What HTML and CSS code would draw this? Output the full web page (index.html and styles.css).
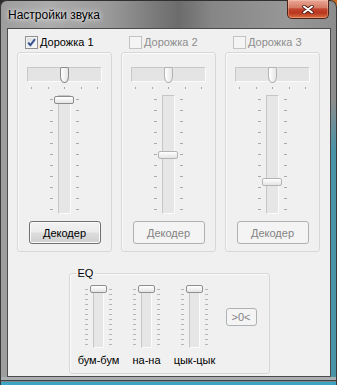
FILE: index.html
```html
<!DOCTYPE html>
<html lang="ru">

<head>
    <meta charset="UTF-8" />
    <meta name="viewport" content="width=device-width, initial-scale=1.0" />
    <title>Настройки звука</title>
    <link rel="stylesheet" href="styles.css">
</head>

<body>
    <div class="window">
        <div class="titlebar">
            <span class="title">Настройки звука</span>
            <button class="close" aria-label="Закрыть">
                <svg width="12" height="9" viewBox="0 0 12 9">
                    <path d="M2 1.5 L10 7.5 M10 1.5 L2 7.5" stroke="#4a1a12" stroke-width="3.6" stroke-linecap="round" fill="none" />
                    <path d="M2 1.5 L10 7.5 M10 1.5 L2 7.5" stroke="#ffffff" stroke-width="2" stroke-linecap="round" fill="none" />
                </svg>
            </button>
        </div>

        <div class="client">
            <div class="tracks">
                <!-- дорожка 1 -->
                <div class="track-col">
                    <label class="check">
                        <span class="box">
                            <svg width="9" height="9" viewBox="0 0 9 9">
                                <path d="M1.2 4.6 L3.4 7.2 L8 1.2" stroke="#34508f" stroke-width="1.9" fill="none" />
                            </svg>
                        </span>
                        Дорожка 1
                    </label>
                    <div class="panel">
                        <div class="hslider">
                            <div class="hchannel"><div class="hthumb"></div></div>
                            <div class="hticks"><i></i><i></i><i></i><i></i><i></i></div>
                        </div>
                        <div class="vslider">
                            <div class="vchannel"></div>
                            <div class="vthumb" style="top: 1px;"></div>
                        </div>
                        <button class="btn">Декодер</button>
                    </div>
                </div>
                <!-- дорожка 2 -->
                <div class="track-col off">
                    <label class="check"><span class="box"></span>Дорожка 2</label>
                    <div class="panel">
                        <div class="hslider">
                            <div class="hchannel"><div class="hthumb"></div></div>
                            <div class="hticks"><i></i><i></i><i></i><i></i><i></i></div>
                        </div>
                        <div class="vslider">
                            <div class="vchannel"></div>
                            <div class="vthumb" style="top: 56px;"></div>
                        </div>
                        <button class="btn" disabled>Декодер</button>
                    </div>
                </div>
                <!-- дорожка 3 -->
                <div class="track-col off">
                    <label class="check"><span class="box"></span>Дорожка 3</label>
                    <div class="panel">
                        <div class="hslider">
                            <div class="hchannel"><div class="hthumb"></div></div>
                            <div class="hticks"><i></i><i></i><i></i><i></i><i></i></div>
                        </div>
                        <div class="vslider">
                            <div class="vchannel"></div>
                            <div class="vthumb" style="top: 83px;"></div>
                        </div>
                        <button class="btn" disabled>Декодер</button>
                    </div>
                </div>
            </div>

            <fieldset class="eq">
                <legend>EQ</legend>
                <div class="eq-row">
                    <div class="eq-col">
                        <div class="eslider"><div class="echannel"></div><div class="ethumb"></div></div>
                        <span class="eq-label">бум-бум</span>
                    </div>
                    <div class="eq-col">
                        <div class="eslider"><div class="echannel"></div><div class="ethumb"></div></div>
                        <span class="eq-label">на-на</span>
                    </div>
                    <div class="eq-col">
                        <div class="eslider"><div class="echannel"></div><div class="ethumb"></div></div>
                        <span class="eq-label">цык-цык</span>
                    </div>
                    <button class="btn small" disabled>&gt;0&lt;</button>
                </div>
            </fieldset>
        </div>
    </div>
</body>

</html>
```

FILE: styles.css
```css
* {
    box-sizing: border-box;
}

body {
    margin: 0;
    background: linear-gradient(90deg, #2b2b2b 50%, #c8681c 50%);
    font-family: 'Liberation Sans', Arial, sans-serif;
    font-size: 11px;
}

/* окно в стиле Vista */
.window {
    width: 337px;
    height: 385px;
    display: flex;
    flex-direction: column;
    border-radius: 7px 7px 0 0;
    overflow: hidden;
    box-shadow: inset 0 1px 0 #303030, inset 1px 0 0 #3a3a3a, inset -1px 0 0 #3a3a3a;
    background-image:
        linear-gradient(to bottom, transparent 377px, #a9aeb0 377px 380px, #3d4245 380px 381px, #7d8689 381px 382px, #3ba5c4 382px),
        linear-gradient(to bottom, transparent 100px, #4a94a8 150px),
        linear-gradient(90deg, #9c9c9c 0, #acacac 14%, #9a9a9a 32%, #7a7a7a 46%, #6c6c6c 53%, #868686 63%, #979797 85%, #8c8c8c 100%);
    background-size: 100% 100%, 6px 100%, 100% 100%;
    background-position: 0 0, right top, 0 0;
    background-repeat: no-repeat;
}

.titlebar {
    height: 28px;
    flex: none;
    display: flex;
    justify-content: space-between;
    padding: 0 8px;
}

.title {
    margin-top: 9px;
    font-size: 12px;
    line-height: 1;
    color: #000;
    text-shadow: 0 0 7px #fff, 0 0 3px rgba(255, 255, 255, 0.7);
}

.close {
    width: 42px;
    height: 19px;
    padding: 0;
    display: flex;
    align-items: center;
    justify-content: center;
    border: 1px solid #4d2218;
    border-top: none;
    border-radius: 0 0 5px 5px;
    background: linear-gradient(#e9a795 0%, #d67c66 42%, #c2452d 50%, #b8361f 72%, #dc6f40 100%);
    box-shadow: inset 0 0 0 1px rgba(255, 220, 200, 0.35);
}

.client {
    margin: 0 6px 0 7px;
    height: 349px;
    flex: none;
    border: 1px solid #4b4b4b;
    background: #f0f0f0;
    padding-top: 7px;
}

.tracks {
    display: flex;
    gap: 9px;
    padding-left: 9px;
}

.track-col {
    width: 95px;
}

.check {
    display: flex;
    align-items: center;
    gap: 2px;
    height: 13px;
    line-height: 13px;
    margin: 0 0 3px 8px;
    color: #000;
}

.box {
    width: 13px;
    height: 13px;
    flex: none;
    display: flex;
    align-items: center;
    justify-content: center;
    border: 1px solid #8e8f8f;
    background: linear-gradient(135deg, #d7dade, #fbfbfb);
    box-shadow: inset 0 0 0 1px #f4f4f4;
}

.off .check {
    color: #8d8d8d;
}

.off .box {
    border-color: #c3c3c3;
    background: #f4f4f4;
    box-shadow: none;
}

/* рамка дорожки */
.panel {
    height: 200px;
    display: flex;
    flex-direction: column;
    align-items: center;
    padding-top: 14px;
    border: 1px solid #d7d7d7;
    border-radius: 3px;
    box-shadow: inset 1px 1px 0 #fbfbfb;
}

.hslider {
    width: 75px;
}

.hchannel {
    position: relative;
    height: 15px;
    background: #e4e4e4;
    border: 1px solid;
    border-color: #c8c8c8 #fbfbfb #fbfbfb #c8c8c8;
}

.hthumb {
    position: absolute;
    left: 32px;
    top: -1px;
    width: 9px;
    height: 16px;
    border: 1px solid #8b8b8b;
    border-radius: 2px 2px 4px 4px / 2px 2px 7px 7px;
    background: linear-gradient(90deg, #ffffff, #e6e6e6);
}

.hticks {
    display: flex;
    justify-content: space-between;
    height: 2px;
    margin-top: 5px;
    padding: 0 4px;
}

.hticks i {
    width: 1px;
    height: 2px;
    background: #a9a9a9;
}

.vslider {
    position: relative;
    width: 29px;
    height: 119px;
    margin-top: 6px;
    display: flex;
    justify-content: center;
    background-image:
        repeating-linear-gradient(to bottom, #a9a9a9 0 1px, transparent 1px 11px),
        repeating-linear-gradient(to bottom, #a9a9a9 0 1px, transparent 1px 11px);
    background-size: 3px 111px;
    background-position: 0 4px, 100% 4px;
    background-repeat: no-repeat;
}

.vchannel {
    width: 13px;
    height: 100%;
    background: #e6e6e6;
    border: 1px solid;
    border-color: #c6c6c6 #fbfbfb #fbfbfb #c6c6c6;
}

.vthumb {
    position: absolute;
    left: 4px;
    width: 20px;
    height: 8px;
    border: 1px solid #8b8b8b;
    border-radius: 2px;
    background: linear-gradient(#ffffff, #e4e4e4);
}

.off .hthumb,
.off .vthumb {
    border-color: #b3b3b3;
}

.btn {
    width: 72px;
    height: 23px;
    margin-top: 7px;
    padding: 0;
    font-family: 'Liberation Sans', Arial, sans-serif;
    font-size: 11px;
    color: #000;
    border: 1px solid #707070;
    border-radius: 3px;
    background: linear-gradient(#f2f2f2 0, #ebebeb 48%, #dddddd 52%, #cfcfcf 100%);
    box-shadow: inset 0 0 0 1px #fbfbfb;
}

.btn:disabled {
    color: #838383;
    border-color: #adb2b5;
    background: #f4f4f4;
    box-shadow: none;
}

/* эквалайзер */
.eq {
    width: 201px;
    margin: 15px auto 0;
    padding: 0 0 6px 5px;
    border: 1px solid #d7d7d7;
    border-radius: 3px;
    box-shadow: inset 1px 1px 0 #fbfbfb;
}

.eq legend {
    margin-left: 1px;
    padding: 0 2px;
    line-height: 13px;
    font-size: 11px;
    color: #000;
}

.eq-row {
    display: flex;
    margin-top: 5px;
}

.eq-col {
    width: 48px;
    display: flex;
    flex-direction: column;
    align-items: center;
}

.eslider {
    position: relative;
    width: 27px;
    height: 63px;
    display: flex;
    justify-content: center;
    background-image:
        repeating-linear-gradient(to bottom, #b5b5b5 0 1px, transparent 1px 5px),
        repeating-linear-gradient(to bottom, #b5b5b5 0 1px, transparent 1px 5px);
    background-size: 3px 56px;
    background-position: 0 4px, 100% 4px;
    background-repeat: no-repeat;
}

.echannel {
    width: 11px;
    height: 61px;
    margin-top: 2px;
    background: #e6e6e6;
    border: 1px solid;
    border-color: #c6c6c6 #fbfbfb #fbfbfb #c6c6c6;
}

.ethumb {
    position: absolute;
    top: 0;
    left: 5px;
    width: 17px;
    height: 8px;
    border: 1px solid #8e8e8e;
    border-radius: 2px;
    background: linear-gradient(#ffffff, #e4e4e4);
}

.eq-label {
    margin-top: 6px;
    line-height: 13px;
    color: #000;
}

.btn.small {
    width: 31px;
    height: 18px;
    margin: 23px 0 0 7px;
    align-self: flex-start;
}
```
